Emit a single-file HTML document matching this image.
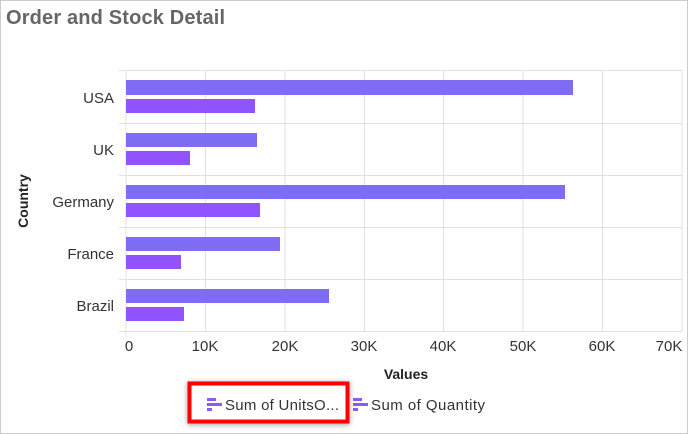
<!DOCTYPE html>
<html><head><style>
body{margin:0;width:688px;height:434px;overflow:hidden;background:#fff;font-family:"Liberation Sans",sans-serif}
.frame{position:absolute;left:0;top:0;width:686px;height:432px;border:1px solid #ccc}
</style></head><body>
<div class="frame"></div>
<svg width="688" height="434" style="position:absolute;left:0;top:0" font-family="Liberation Sans, sans-serif">
<text x="6" y="24" font-size="20" font-weight="bold" fill="#666" textLength="219">Order and Stock Detail</text>
<g stroke="#e0e0e0" stroke-width="1">
<line x1="126" y1="70" x2="126" y2="331"/><line x1="205.5" y1="70" x2="205.5" y2="331"/><line x1="285" y1="70" x2="285" y2="331"/><line x1="364.5" y1="70" x2="364.5" y2="331"/><line x1="443.5" y1="70" x2="443.5" y2="331"/><line x1="523" y1="70" x2="523" y2="331"/><line x1="602.5" y1="70" x2="602.5" y2="331"/><line x1="682" y1="70" x2="682" y2="331"/>
<line x1="119" y1="70.5" x2="682" y2="70.5"/><line x1="119" y1="123.5" x2="682" y2="123.5"/><line x1="119" y1="175.5" x2="682" y2="175.5"/><line x1="119" y1="227.5" x2="682" y2="227.5"/><line x1="119" y1="279.5" x2="682" y2="279.5"/><line x1="119" y1="331.5" x2="682" y2="331.5"/>
<line x1="126" y1="331" x2="126" y2="337"/>
</g>
<g fill="#7f6cf5">
<rect x="126" y="80" width="447" height="15"/><rect x="126" y="133" width="131" height="14"/><rect x="126" y="185" width="439" height="14"/><rect x="126" y="237" width="154" height="14"/><rect x="126" y="289" width="203" height="14"/>
</g>
<g fill="#9153ff">
<rect x="126" y="99" width="129" height="14"/><rect x="126" y="151" width="64" height="14"/><rect x="126" y="203" width="134" height="14"/><rect x="126" y="255" width="55" height="14"/><rect x="126" y="307" width="58" height="14"/>
</g>
<g font-size="15" fill="#333" text-anchor="end">
<text x="114" y="103">USA</text><text x="114" y="155">UK</text><text x="114" y="207">Germany</text><text x="114" y="259">France</text><text x="114" y="311">Brazil</text>
</g>
<g font-size="15" fill="#333" text-anchor="middle">
<text x="129" y="351">0</text><text x="205" y="351">10K</text><text x="285" y="351">20K</text><text x="364" y="351">30K</text><text x="443" y="351">40K</text><text x="523" y="351">50K</text><text x="602" y="351">60K</text><text x="669" y="351">70K</text>
</g>
<text x="406" y="379" font-size="14" font-weight="bold" fill="#222" text-anchor="middle">Values</text>
<text transform="translate(28,201) rotate(-90)" font-size="14" font-weight="bold" fill="#222" text-anchor="middle">Country</text>
<rect x="189.5" y="383.5" width="158" height="38" fill="#fff" stroke="#f00" stroke-width="4" style="filter:drop-shadow(0 1px 3px rgba(0,0,0,.4))"/>
<g fill="#8a5cf6"><rect x="207" y="398" width="9" height="3"/><rect x="207" y="403" width="15" height="3"/><rect x="207" y="408" width="5" height="3"/></g>
<text x="225" y="410" font-size="15" fill="#333" textLength="114">Sum of UnitsO...</text>
<g fill="#8a5cf6"><rect x="353" y="398" width="9" height="3"/><rect x="353" y="403" width="15" height="3"/><rect x="353" y="408" width="5" height="3"/></g>
<text x="371" y="410" font-size="15" fill="#333" textLength="114">Sum of Quantity</text>
</svg>
</body></html>
